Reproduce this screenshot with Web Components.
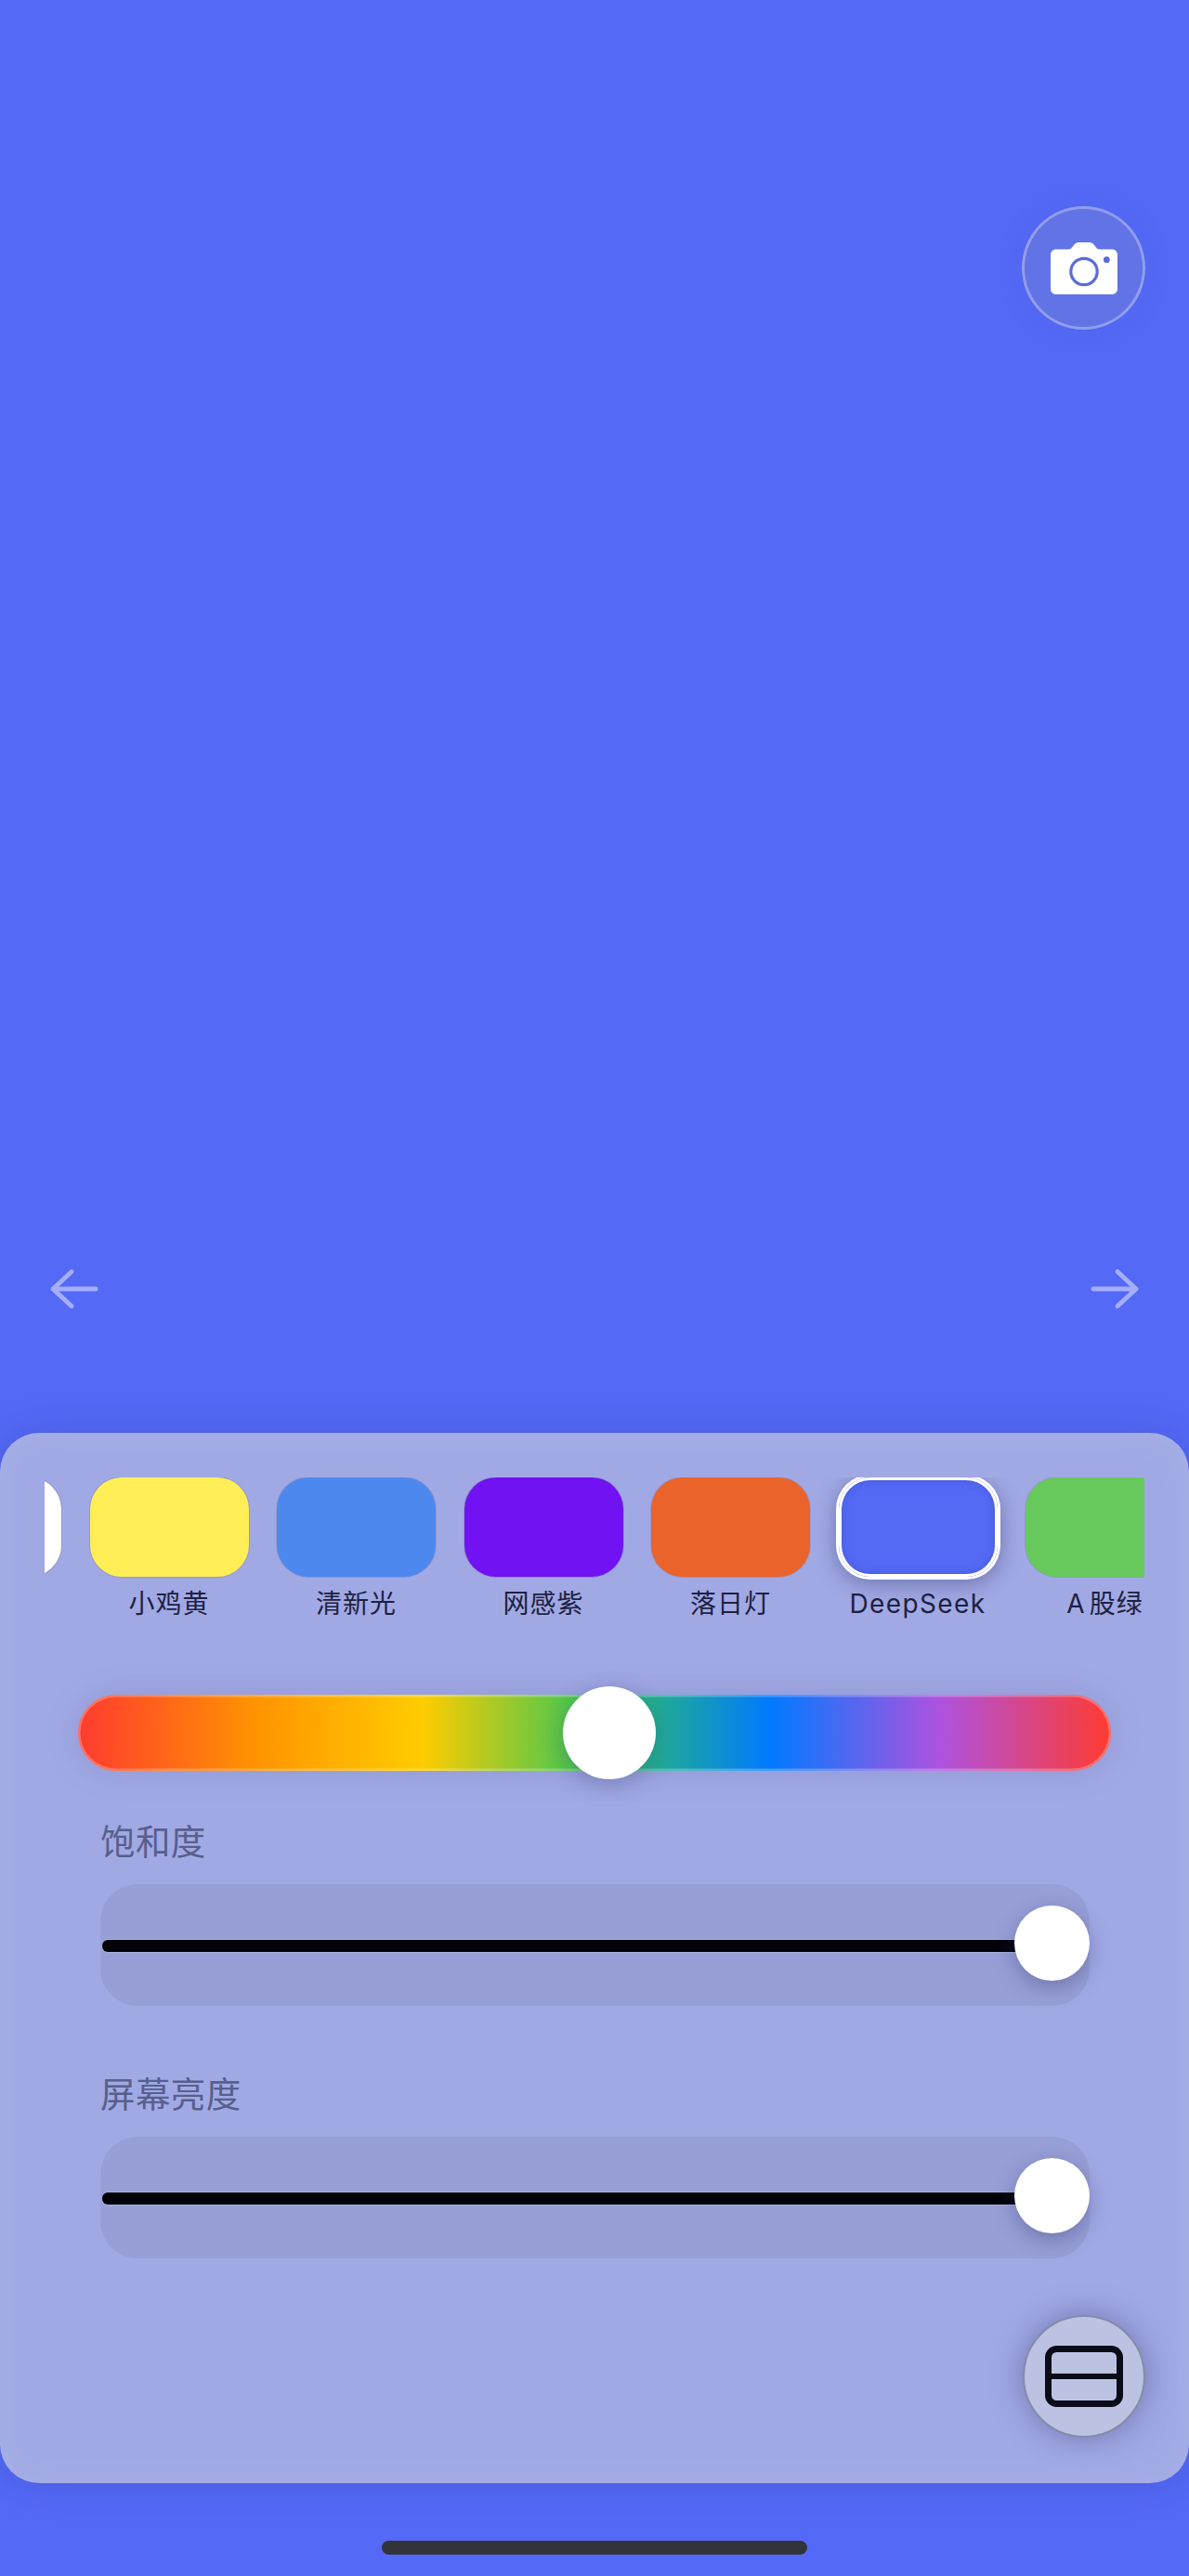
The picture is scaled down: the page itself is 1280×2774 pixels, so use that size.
<!DOCTYPE html>
<html lang="zh"><head><meta charset="utf-8"><title>屏幕补光灯</title>
<style>
html,body{margin:0;padding:0;background:#5469f6}
body{font-family:Inter,"Noto Sans CJK SC",sans-serif;width:1280px;height:2774px;overflow:hidden}
</style></head><body>
<light-screen>
  <camera-button></camera-button>
  <nav-arrows></nav-arrows>
  <control-panel>
    <swatch-strip>
      <swatch-item color="#ffffff"></swatch-item>
      <swatch-item color="#ffee55">小鸡黄</swatch-item>
      <swatch-item color="#4d88ef">清新光</swatch-item>
      <swatch-item color="#7012f2">网感紫</swatch-item>
      <swatch-item color="#ea632b">落日灯</swatch-item>
      <swatch-item color="#5469f4" selected>DeepSeek</swatch-item>
      <swatch-item color="#67c95b"><span style="margin-right:4px">A</span>股绿</swatch-item>
    </swatch-strip>
    <hue-slider></hue-slider>
    <value-slider style="margin-top:59px">饱和度</value-slider>
    <value-slider style="margin-top:78px">屏幕亮度</value-slider>
    <layout-button></layout-button>
  </control-panel>
  <home-indicator></home-indicator>
</light-screen>
<script>
function def(name, html, init){
  customElements.define(name, class extends HTMLElement{
    constructor(){super();const r=this.attachShadow({mode:'open'});r.innerHTML=html;if(init)init(this,r);}
    connectedCallback(){if(this.onConnect)this.onConnect();}
  });
}
def('light-screen',`<style>:host{display:flex;flex-direction:column;width:1280px;height:2774px;background:#5469f6;color:#1c2140}</style><slot></slot>`);
def('camera-button',`<style>
:host{display:flex;align-items:center;justify-content:center;box-sizing:border-box;width:133px;height:133px;margin:222px 47px 0 auto;border-radius:50%;background:rgba(130,140,190,.3);border:3px solid rgba(255,255,255,.3);box-shadow:0 0 30px rgba(60,70,170,.12)}
svg{display:block}</style>
<svg width="72" height="56" viewBox="0 0 72 56"><path fill="#fff" d="M6 7.500h13c2 0 3-.6 4.200-2.200l1.800-2.300C26.500 1 28 0 30.500 0h11c2.500 0 4 1 5.500 3l1.800 2.300c1.200 1.600 2.200 2.200 4.200 2.200H66c3.600 0 6 2.400 6 6V50c0 3.600-2.400 6-6 6H6c-3.600 0-6-2.400-6-6V13.500c0-3.600 2.400-6 6-6Z"/><circle cx="36" cy="31.500" r="14.200" fill="#fff" stroke="#5a6cd6" stroke-width="3.200"/><circle cx="60.300" cy="18.700" r="3.400" fill="#5a6cd6"/></svg>`);
def('nav-arrows',`<style>
:host{display:flex;justify-content:space-between;height:46px;margin:1010px 52px 0 52px}
svg{display:block}</style>
<svg width="56" height="46" viewBox="0 0 56 46"><path d="M51 23H5M25 4.500 5 23l20 18.500" fill="none" stroke="#a4aefb" stroke-width="5" stroke-linecap="round" stroke-linejoin="round"/></svg>
<svg width="56" height="46" viewBox="0 0 56 46"><path d="M5 23h46M31 4.500 51 23 31 41.500" fill="none" stroke="#a4aefb" stroke-width="5" stroke-linecap="round" stroke-linejoin="round"/></svg>`);
def('control-panel',`<style>
:host{display:flex;flex-direction:column;box-sizing:border-box;width:1280px;height:1131px;margin-top:132px;padding-top:48px;border-radius:42px;background:#a1a9e5;
box-shadow:0 0 44px rgba(30,40,120,.2),inset 0 0 46px rgba(255,255,255,.08)}
</style><slot></slot>`);
def('swatch-strip',`<style>
:host{display:block;width:1184px;height:156px;margin-left:48px;overflow:hidden}
.t{display:flex;gap:30.500px;margin-left:-153px;width:max-content}
</style><div class="t"><slot></slot></div>`);
def('swatch-item',`<style>
:host{display:flex;flex-direction:column;align-items:center;width:171px;flex:none}
.s{box-sizing:border-box;width:171px;height:107px;border-radius:34px;box-shadow:0 0 0 1px rgba(110,110,140,.28)}
:host([selected]) .s{box-shadow:0 0 0 3px #fff,inset 0 0 0 3px #fff,inset 0 0 8px 3px rgba(50,60,170,.35),0 5px 22px 3px rgba(50,55,110,.45)}
:host([selected]) .l{letter-spacing:1.400px}
.l{margin-top:11px;height:36px;line-height:36px;font-size:28px;letter-spacing:1px;color:#1c2140;white-space:nowrap}
</style><div class="s"></div><div class="l"><slot></slot></div>`,(h,r)=>{
  h.onConnect=()=>{r.querySelector('.s').style.background=h.getAttribute('color');};
});
def('hue-slider',`<style>
:host{display:block;position:relative;box-sizing:border-box;width:1112px;height:82px;margin:78px 0 0 84px;border-radius:41px;
background:linear-gradient(90deg,#ff3b30 0%,#ff9500 17.500%,#ffcc00 33.300%,#34c759 50%,#007aff 67%,#af52de 83.600%,#ff3b30 100%);
box-shadow:inset 0 0 0 2.500px rgba(255,255,255,.25),0 0 34px rgba(70,70,130,.18)}
i{position:absolute;left:522px;top:-9px;width:100px;height:100px;border-radius:50%;background:#fff;box-shadow:0 6px 24px rgba(50,55,110,.3)}
</style><i></i>`);
def('value-slider',`<style>
:host{display:block;margin-left:108px;width:1065px}
.n{height:36px;line-height:36px;font-size:37.500px;color:#575f8c;white-space:nowrap;letter-spacing:.4px}
.b{position:relative;height:131px;margin-top:27px;border-radius:40px;background:#979fd6}
.b::before{content:"";position:absolute;left:2px;right:60px;top:60px;height:13px;border-radius:6px;background:#020208;box-shadow:0 0 1px 1px rgba(255,255,255,.18)}
i{position:absolute;right:0;top:23px;width:81px;height:81px;border-radius:50%;background:#fff;box-shadow:0 7px 22px rgba(50,55,110,.38)}
</style><div class="n"><slot></slot></div><div class="b"><i></i></div>`);
def('layout-button',`<style>
:host{display:flex;align-items:center;justify-content:center;box-sizing:border-box;width:132px;height:132px;margin:61px 47px 0 auto;border-radius:50%;background:#bcc3e2;border:2px solid #858ba9;box-shadow:0 0 34px rgba(50,55,110,.45)}
svg{display:block}</style>
<svg width="84" height="66" viewBox="0 0 84 66"><rect x="3.500" y="3.500" width="77" height="59" rx="9" fill="#bcc3e2" stroke="#0b0c18" stroke-width="7"/><path d="M3.500 33h77" stroke="#0b0c18" stroke-width="6"/></svg>`);
def('home-indicator',`<style>:host{display:block;width:458px;height:15px;margin:62px 0 0 411px;border-radius:8px;background:#33333a}</style>`);
</script>
</body></html>
